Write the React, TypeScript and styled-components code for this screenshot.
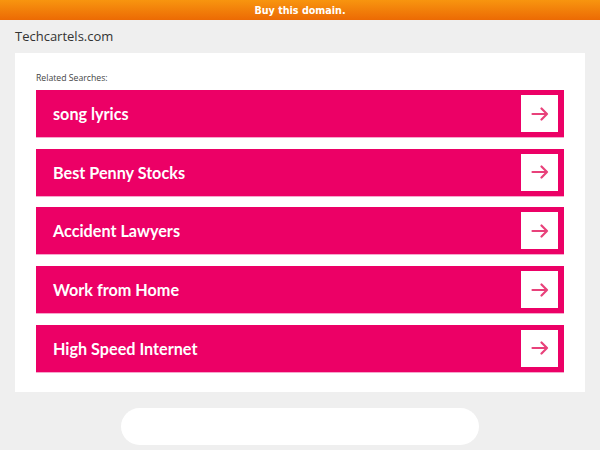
import React, { FC } from "react"
import styled, { createGlobalStyle } from "styled-components"

const GlobalStyle = createGlobalStyle`
  html, body {
    margin: 0;
    padding: 0;
    background: #efefef;
  }
`

const Page = styled.div`
  width: 600px;
  min-height: 450px;
  background: #efefef;
  display: flex;
  flex-direction: column;
`

const TopBar = styled.a`
  display: flex;
  align-items: center;
  justify-content: center;
  height: 20px;
  background: linear-gradient(to bottom, #f8950f 0%, #ec6a04 100%);
  color: #ffffff;
  font-family: "DejaVu Sans", Verdana, sans-serif;
  font-weight: bold;
  font-size: 9.6px;
  text-decoration: none;
`

const DomainTitle = styled.div`
  font-family: "Open Sans", "DejaVu Sans", sans-serif;
  font-size: 13px;
  color: #333333;
  padding: 8px 15px 0;
  height: 25px;
  box-sizing: border-box;
  line-height: 17px;
`

const Card = styled.div`
  margin: 8px 15px 0;
  background: #ffffff;
  padding: 19px 21px 20px;
  display: flex;
  flex-direction: column;
`

const Label = styled.div`
  font-family: "Open Sans", "DejaVu Sans", sans-serif;
  font-size: 8.7px;
  color: #444444;
  line-height: 12px;
  margin-bottom: 6px;
`

const List = styled.div`
  display: flex;
  flex-direction: column;
  gap: 11.7px;
`

const Row = styled.a`
  display: flex;
  align-items: center;
  justify-content: space-between;
  height: 47px;
  background: #ec0066;
  padding: 0 6px 0 17px;
  text-decoration: none;
  box-shadow: 0 1px 0 #f7a6cc;
`

const RowText = styled.span`
  font-family: Lato, "Open Sans", sans-serif;
  font-weight: bold;
  font-size: 16.2px;
  color: #ffffff;
`

const ArrowBox = styled.span`
  width: 37px;
  height: 37px;
  background: #ffffff;
  display: flex;
  align-items: center;
  justify-content: center;
`

const Footer = styled.div`
  display: flex;
  justify-content: center;
  padding-top: 16px;
`

const Pill = styled.div`
  width: 358px;
  height: 37px;
  background: #ffffff;
  border-radius: 19px;
`

const Arrow: FC = () => (
  <svg width="18" height="14" viewBox="0 0 18 14" fill="none">
    <path
      d="M1.5 7 H16 M10.5 1.5 L16 7 L10.5 12.5"
      stroke="#e8417a"
      strokeWidth="2.2"
      strokeLinecap="round"
      strokeLinejoin="round"
    />
  </svg>
)

const searches = [
  "song lyrics",
  "Best Penny Stocks",
  "Accident Lawyers",
  "Work from Home",
  "High Speed Internet",
]

const App: FC = () => {
  return (
    <>
      <GlobalStyle />
      <Page>
        <TopBar href="#">Buy this domain.</TopBar>
        <DomainTitle>Techcartels.com</DomainTitle>
        <Card>
          <Label>Related Searches:</Label>
          <List>
            {searches.map((s) => (
              <Row href="#" key={s}>
                <RowText>{s}</RowText>
                <ArrowBox>
                  <Arrow />
                </ArrowBox>
              </Row>
            ))}
          </List>
        </Card>
        <Footer>
          <Pill />
        </Footer>
      </Page>
    </>
  )
}

export default App
